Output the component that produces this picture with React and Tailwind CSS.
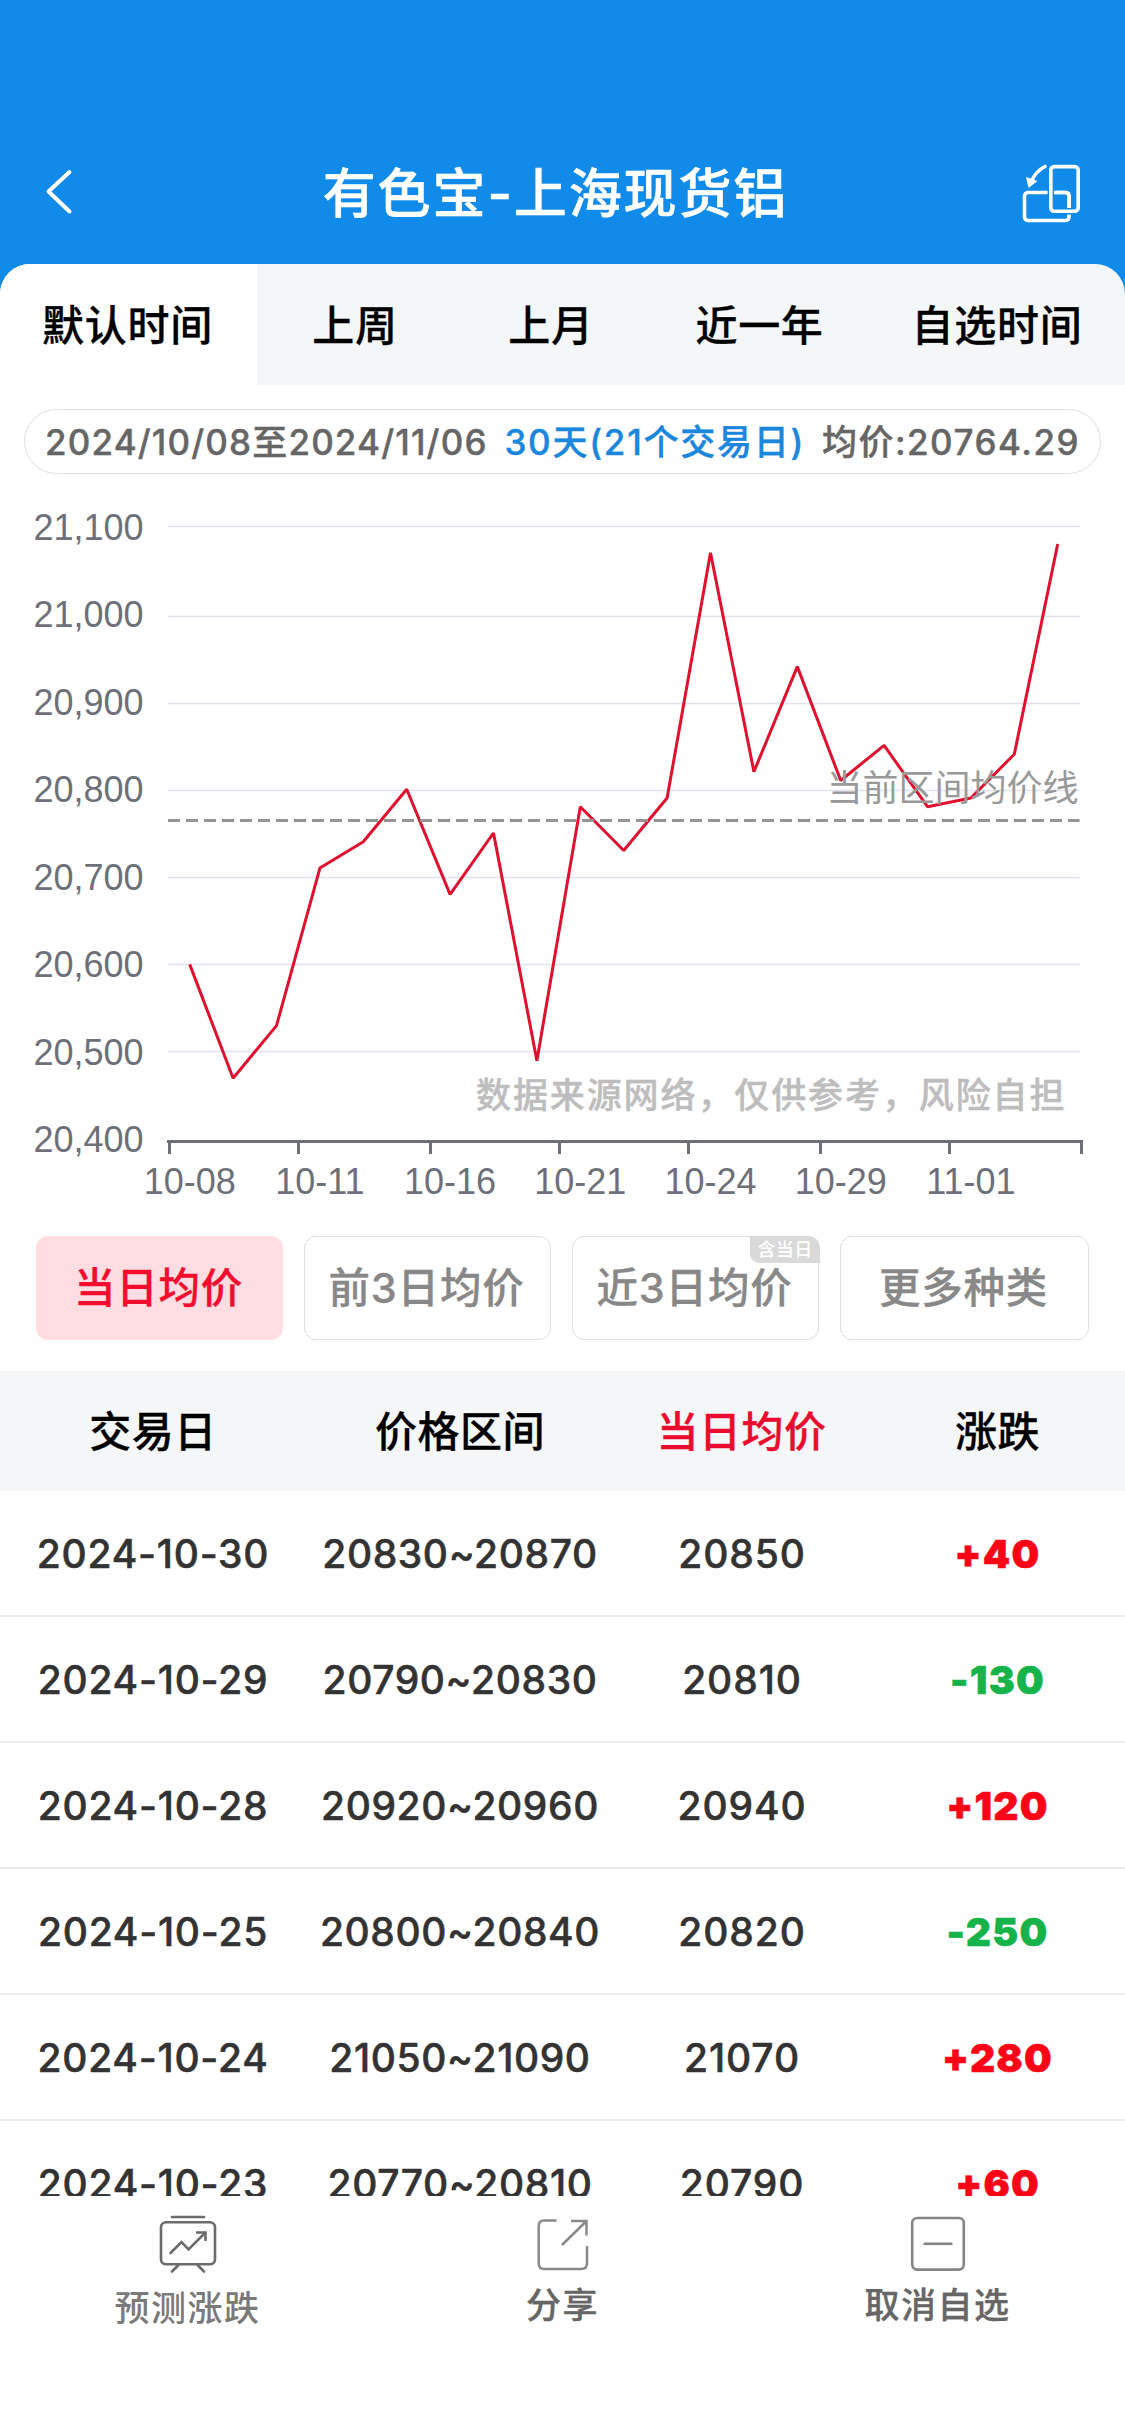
const VALUES = [
  20600, 20470, 20530, 20710, 20740, 20800, 20680, 20750, 20490, 20780, 20730,
  20790, 21070, 20820, 20940, 20810, 20850, 20780, 20790, 20840, 21080,
];
const GRID = [
  ["21,100", 36],
  ["21,000", 126],
  ["20,900", 213],
  ["20,800", 300],
  ["20,700", 387],
  ["20,600", 474],
  ["20,500", 561],
  ["20,400", null],
];
const TICKS = [169.5, 298.5, 430.5, 559.5, 688.5, 820.5, 949.5, 1081.5];
const DATES = ["10-08", "10-11", "10-16", "10-21", "10-24", "10-29", "11-01"];

const px = (i) => 189.7 + i * 43.4;
const py = (v) => 649.5 - (v - 20400) * 0.8757;

const TABS = [
  ["默认时间", "w-[257px] bg-white pr-[2px]"],
  ["上周", "w-[196px]"],
  ["上月", "w-[196px]"],
  ["近一年", "w-[221px]"],
  ["自选时间", "w-[255px] pr-[1px]"],
];

const ROWS = [
  ["2024-10-30", "20830~20870", "20850", "+40"],
  ["2024-10-29", "20790~20830", "20810", "-130"],
  ["2024-10-28", "20920~20960", "20940", "+120"],
  ["2024-10-25", "20800~20840", "20820", "-250"],
  ["2024-10-24", "21050~21090", "21070", "+280"],
  ["2024-10-23", "20770~20810", "20790", "+60"],
];

function Header() {
  return (
    <header className="flex h-[294px] items-start justify-between bg-[#108be9] pt-[156px]">
      <svg className="ml-[40px] h-[72px] w-[72px]" viewBox="40 156 72 72" fill="none" stroke="#fff" strokeWidth="4" strokeLinecap="round" strokeLinejoin="round">
        <path d="M69.5 172 L48.5 191.5 L69.5 211.5" />
      </svg>
      <h1 className="mt-[2px] mr-[17px] whitespace-nowrap text-[53px] leading-[72px] tracking-[1.9px] font-medium text-white [-webkit-text-stroke:0.6px]">有色宝-上海现货铝</h1>
      <svg className="mr-[37px] h-[72px] w-[72px]" viewBox="1016 156 72 72" fill="none" stroke="#fff" strokeWidth="3.6">
        <rect x="1024.5" y="192.5" width="44.5" height="28" rx="3.5" />
        <rect x="1050.8" y="166.6" width="27.4" height="44.6" rx="3.5" stroke="#108be9" strokeWidth="6.4" />
        <path d="M1055 192.5 H1065.5 Q1069 192.5 1069 196 V207.5" />
        <rect x="1050.8" y="166.6" width="27.4" height="44.6" rx="3.5" />
        <path d="M1045 166.5 Q1036 171 1031.5 181" strokeLinecap="round" />
        <path d="M1026 177 L1037.5 181 L1028.5 188 Z" fill="#fff" stroke="none" />
      </svg>
    </header>
  );
}

function Chart() {
  return (
    <svg className="block h-[730px] w-[1125px]" viewBox="0 0 1125 730" fill="none">
      {GRID.map(([label, y], i) => (
        <g key={label}>
          {y !== null && <path d={`M168 ${y + 0.5} H1079.5`} stroke="#E0E3EE" strokeWidth="1.6" />}
          <text x="143.5" y={49.5 + i * 87.55} textAnchor="end" fontSize="36" fill="#6E7079" className="font-['Liberation_Sans',sans-serif]">
            {label}
          </text>
        </g>
      ))}
      <path d="M167 651.5 H1083" stroke="#6E7079" strokeWidth="3" />
      {TICKS.map((x) => (
        <path key={x} d={`M${x} 650 V664`} stroke="#6E7079" strokeWidth="3" />
      ))}
      {DATES.map((d, i) => (
        <text key={d} x={px(i * 3)} y="704" textAnchor="middle" fontSize="36" fill="#6E7079" className="font-['Liberation_Sans',sans-serif]">
          {d}
        </text>
      ))}
      <polyline points={VALUES.map((v, i) => `${px(i)},${py(v)}`).join(" ")} stroke="#E0102E" strokeWidth="3" strokeLinejoin="bevel" />
      <path d="M168 330.5 H1079.5" stroke="#949494" strokeWidth="3" strokeDasharray="12 6" />
      <text x="1078.5" y="310.5" textAnchor="end" fontSize="36" fill="#999">当前区间均价线</text>
      <text x="476" y="617.5" fontSize="35" letterSpacing="1.9" fill="#BDBDBD" stroke="#BDBDBD" strokeWidth="0.4" fontWeight="500">数据来源网络，仅供参考，风险自担</text>
    </svg>
  );
}

function Option({ label, active, badge }) {
  return (
    <button
      className={
        "relative h-[104px] rounded-[12px] pr-[2px] text-[41.5px] tracking-[0.8px] font-medium [-webkit-text-stroke:0.3px] " +
        (active ? "bg-[#ffdde3] text-[#f20c2e]" : "border-[1.5px] border-[#e0e0e0] text-[#888]")
      }
    >
      {label}
      {badge && (
        <span className="absolute -top-px -right-[2px] h-[27px] w-[70px] rounded-tr-[12px] rounded-bl-[9px] bg-[#d9d9d9] text-[18px] leading-[27px] tracking-[0.3px] text-white [-webkit-text-stroke:0px]">{badge}</span>
      )}
    </button>
  );
}

const GRID_COLS = "grid grid-cols-[306px_308px_256px_255px] items-center text-center ";

export default function App() {
  return (
    <div className="flex h-[2436px] w-[1125px] flex-col overflow-hidden bg-white font-['Inter','Noto_Sans_CJK_SC',sans-serif]">
      <Header />
      <nav className="-mt-[30px] flex h-[121px] shrink-0 overflow-hidden rounded-t-[30px] bg-[#f4f6f8] text-[42px] font-medium text-black [-webkit-text-stroke:0.3px]">
        {TABS.map(([label, cls]) => (
          <div key={label} className={"flex items-center justify-center whitespace-nowrap pt-[1px] tracking-[0.7px] " + cls}>
            {label}
          </div>
        ))}
      </nav>
      <div className="mx-[24px] mt-[24px] flex h-[65px] shrink-0 items-center justify-between rounded-full border-[1.5px] border-[#dedede] px-[20px] pt-[2px] text-[35px] font-medium whitespace-nowrap text-[#666] [-webkit-text-stroke:0.4px]">
        <span className="tracking-[1.15px]">2024/10/08至2024/11/06</span>
        <span className="tracking-[1.75px] text-[#1b87dc]">30天(21个交易日)</span>
        <span className="tracking-[1.5px]">均价:20764.29</span>
      </div>
      <div className="mt-[16px] h-[730px] shrink-0">
        <Chart />
      </div>
      <div className="mx-[36px] mt-[16px] grid shrink-0 grid-cols-[247px_247px_247px_249px] gap-[21px]">
        <Option label="当日均价" active />
        <Option label="前3日均价" />
        <Option label="近3日均价" badge="含当日" />
        <Option label="更多种类" />
      </div>
      <div className={GRID_COLS + "mt-[31px] h-[120px] shrink-0 bg-[#f4f6f8] text-[42px] tracking-[0.5px] font-medium text-black [-webkit-text-stroke:0.3px]"}>
        <span>交易日</span>
        <span>价格区间</span>
        <span className="pr-[1px] text-[#ea0c2e]">当日均价</span>
        <span>涨跌</span>
      </div>
      <div className="h-[705px] shrink-0 overflow-hidden">
        {ROWS.map(([date, range, avg, diff]) => (
          <div key={date} className={GRID_COLS + "h-[126px] border-b-2 border-[#ededed] pt-[2px] text-[39px] font-medium text-[#333] [-webkit-text-stroke:0.5px]"}>
            <span className="tracking-[0.75px]">{date}</span>
            <span className="tracking-[0.6px]">{range}</span>
            <span className="tracking-[0.9px]">{avg}</span>
            <span className={"font-black tracking-[1.2px] " + (diff[0] === "+" ? "text-[#fb0418]" : "text-[#16b24a]")}>{diff}</span>
          </div>
        ))}
      </div>
      <footer className="grid grow grid-cols-3 bg-white pt-[16px] text-[35px] tracking-[1.5px] font-medium text-[#666]">
        <div className="flex flex-col items-center">
          <svg className="h-[66px] w-[66px]" viewBox="0 0 66 66" fill="none" stroke="#6b6b6b" strokeWidth="2.6" strokeLinecap="round">
            <path d="M17 5 H49" />
            <rect x="6" y="10.2" width="54" height="42" rx="5" />
            <path d="M15.5 41 L26.5 30 L33.5 37.5 L50 21" />
            <path d="M41 20.5 H50.5 V29" strokeLinecap="butt" />
            <path d="M23.5 53 L17 59.5 M42.5 53 L49 59.5" />
          </svg>
          <span className="mt-[6px] leading-[48px] text-[#7a7a7a]">预测涨跌</span>
        </div>
        <div className="flex flex-col items-center">
          <svg className="h-[66px] w-[66px]" viewBox="0 0 66 66" fill="none" stroke="#8a8a8a" strokeWidth="2.5">
            <path d="M26.5 8.5 H14 Q8.7 8.5 8.7 14 V51.5 Q8.7 57 14 57 H51 Q57 57 57 51.5 V34" />
            <path d="M41 9 H56.5 V23.5 M56 9.5 L32 33" />
          </svg>
          <span className="mt-[3px] leading-[48px] [-webkit-text-stroke:0.3px]">分享</span>
        </div>
        <div className="flex flex-col items-center">
          <svg className="h-[66px] w-[66px]" viewBox="0 0 66 66" fill="none" stroke="#858585" strokeWidth="2.6">
            <rect x="7.2" y="6" width="51.6" height="51.6" rx="5" />
            <path d="M18.5 31.8 H47.5" />
          </svg>
          <span className="mt-[3px] leading-[48px] [-webkit-text-stroke:0.3px]">取消自选</span>
        </div>
      </footer>
    </div>
  );
}
